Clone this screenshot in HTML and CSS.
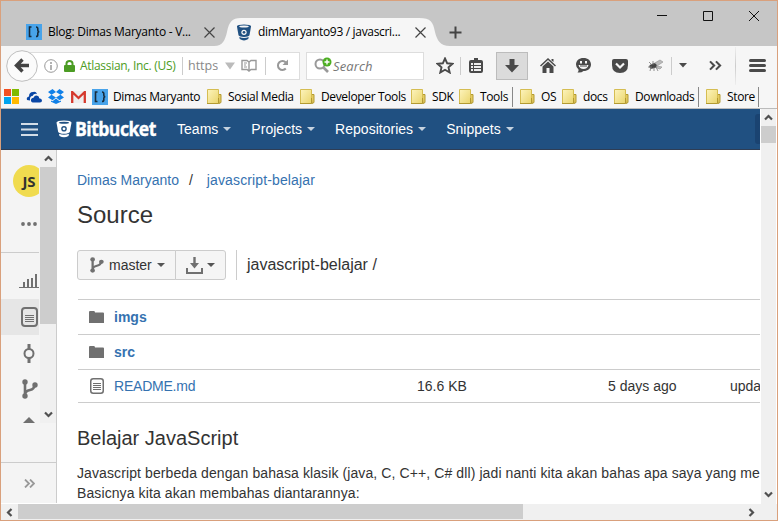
FILE: index.html
```html
<!DOCTYPE html>
<html lang="en">
<head>
<meta charset="utf-8">
<title>dimMaryanto93 / javascript-belajar</title>
<link rel="stylesheet" href="styles.css">
</head>
<body>
<svg class="defs" width="0" height="0" aria-hidden="true">
  <defs>
    <linearGradient id="fold" x1="0" y1="0" x2="1" y2="1"><stop offset="0" stop-color="#fdf4bd"/><stop offset="1" stop-color="#ead56c"/></linearGradient>
    <symbol id="folder" viewBox="0 0 16 16"><path d="M11 5.500h3v8l-2 1z" fill="#e5cc62" stroke="#b39a32"/><path d="M.5.500h11v14h-11z" fill="url(#fold)" stroke="#d5bd52"/><path d="M0 14.500h11.500V9" fill="none" stroke="#b39a32"/></symbol>
    <symbol id="braces" viewBox="0 0 16 16"><path d="M0 0h16v16H0z" fill="#48a3ea"/><path d="M5.500 3H3.500v9.500h2M10 3q1.800 0 1.800 1.800v1.500q0 1.200 1.400 1.400q-1.400.200-1.400 1.400v1.600q0 1.800-1.800 1.800" fill="none" stroke="#172b3c" stroke-width="1.600"/></symbol>
    <symbol id="branch" viewBox="0 0 16 20"><path d="M3 3v14M3 16q0-4 5-5q4.500-1 4.500-5" fill="none" stroke="currentColor" stroke-width="2.600"/><circle cx="3" cy="3" r="2.700" fill="currentColor"/><circle cx="3" cy="17" r="2.700" fill="currentColor"/><circle cx="13" cy="6" r="2.700" fill="currentColor"/></symbol>
    <symbol id="close" viewBox="0 0 11 11"><path d="M.5.5l10 10M10.500.500l-10 10" fill="none" stroke="currentColor" stroke-width="1.200"/></symbol>
    <symbol id="chev" viewBox="0 0 9 7"><path d="M1 5.500L4.500 2L8 5.500" fill="none" stroke="#505050" stroke-width="2.200"/></symbol>
    <symbol id="file" viewBox="0 0 17 20"><rect x="1" y="1" width="15" height="18" rx="3" fill="none" stroke="currentColor" stroke-width="2"/><path d="M4 8.500h9M4 10.500h9M4 12.500h9M4 14.500h9" stroke="currentColor"/></symbol>
    <symbol id="bucket" viewBox="0 0 16 18"><path d="M.5 2.500Q1 .500 8 .500T15.500 2.500L13.800 12Q12.500 13.800 8 13.800T2.200 12z" fill="currentColor"/><path d="M3 13.700Q8 15.800 13 13.700L12.500 16Q8 18.700 3.500 16z" fill="currentColor"/><ellipse class="hole" cx="8" cy="2.700" rx="5" ry="1"/><circle class="hole" cx="8" cy="8.800" r="2.800"/><circle cx="8" cy="8.800" r="1.400" fill="currentColor"/></symbol>
    <symbol id="more" viewBox="0 0 14 12"><path d="M1 1.500L5.500 6L1 10.500M7.500 1.500L12 6L7.500 10.500" fill="none" stroke="currentColor" stroke-width="2.300"/></symbol>
  </defs>
</svg>
<div class="window">
  <header class="tabs">
    <svg class="tab-shape" width="242" height="28" viewBox="0 0 242 28"><path d="M0 28C9 28 11 22 13 14C15 4 18 0 27 0H205C217 0 219 4 221 14C223 22 226 28 236 28z" fill="#f6f6f6"/></svg>
    <svg class="tab-icon" width="16" height="16"><use href="#braces"/></svg>
    <span class="tab-title first">Blog: Dimas Maryanto - V...</span>
    <svg class="tab-close" width="11" height="11"><use href="#close"/></svg>
    <svg class="tab-bucket" width="16" height="17"><use href="#bucket"/></svg>
    <span class="tab-title second">dimMaryanto93 / javascri...</span>
    <svg class="tab-close" width="11" height="11"><use href="#close"/></svg>
    <svg class="tab-new" width="13" height="13"><path d="M6.500.500v12M.500 6.500h12" stroke="#444" stroke-width="2"/></svg>
    <svg class="controls" width="110" height="12" fill="none" stroke="#111"><path d="M1 5.500h10"/><path d="M47.500 1.500h9v9h-9z"/><path d="M93 1l10 10M103 1L93 11"/></svg>
  </header>

  <nav class="toolbar">
    <div class="url">
      <svg class="back" width="32" height="32"><circle cx="16" cy="16" r="15.300" fill="#fbfbfb" stroke="#bebebe"/><path d="M16.500 9.500L10.500 15.500L16.500 21.500M11 15.500H23" fill="none" stroke="#444" stroke-width="3.400"/></svg>
      <svg class="info" width="14" height="14"><circle cx="7" cy="7" r="6.300" fill="none" stroke="#999"/><path d="M7 6v5M7 3v2" stroke="#999" stroke-width="1.500"/></svg>
      <svg class="lock" width="11" height="12"><path d="M2.500 6V3.500a3 2.500 0 0 1 6 0V6" fill="none" stroke="#4c9c24" stroke-width="2"/><rect y="5" width="11" height="7" rx="1" fill="#4c9c24"/></svg>
      <span class="identity">Atlassian, Inc. (US)</span>
      <span class="https">https</span>
      <svg class="drop" width="10" height="8"><path d="M0 .500h10L5 7.500z" fill="#bbb"/></svg>
      <svg class="reader" width="16" height="13"><path d="M1 1.500h5l2 1.500l2-1.500h5v9h-5L8 12l-2-1.500H1zM8 3v8" fill="none" stroke="#999" stroke-width="1.400"/><path d="M3 4h3M3 6h2M3 8h3" stroke="#999"/></svg>
      <i class="sep"></i>
      <svg class="reload" width="13" height="13"><path d="M9.800 9.500A4.500 4.500 0 1 1 9.800 3.500" fill="none" stroke="#999" stroke-width="2"/><path d="M12 .500v5.500H6.500z" fill="#999"/></svg>
    </div>
    <div class="search">
      <svg width="18" height="18"><circle cx="6" cy="7" r="4.500" fill="none" stroke="#999" stroke-width="2"/><path d="M9 10l5 5" stroke="#999" stroke-width="2.600"/><circle cx="13" cy="5" r="4.500" fill="#4dae22"/><path d="M13 2.500v5M10.500 5h5" stroke="#fff" stroke-width="1.400"/></svg>
      <span>Search</span>
    </div>
    <svg class="star" width="18" height="17"><path d="M9 1.500l2.200 4.800l5.300.500l-4 3.600l1.200 5.100L9 12.800l-4.700 2.700l1.200-5.100l-4-3.600l5.300-.5z" fill="none" stroke="#4a4a4a" stroke-width="1.900"/></svg>
    <i class="sep s1"></i>
    <svg class="clip" width="14" height="15"><path d="M5 0h4v2h3q2 0 2 2v9q0 2-2 2H2q-2 0-2-2V4q0-2 2-2h3z" fill="#4a4a4a"/><path d="M2 5h2v2H2zM5 5h7v2H5zM2 8h2v2H2zM5 8h7v2H5zM2 11h2v2H2zM5 11h7v2H5z" fill="#f0f0f0"/></svg>
    <div class="download"><svg width="14" height="14"><path d="M4.500 0h5v6h4.500L7 13.500L0 6h4.500z" fill="#4a4a4a"/></svg></div>
    <svg class="home" width="16" height="15"><path d="M.5 8L8 1l7.500 7" fill="none" stroke="#4a4a4a" stroke-width="1.500"/><path d="M2.500 8.500L8 3.500l5.500 5V15h-4v-5h-3v5h-4zM11.500 1h2v3l-2-1.500z" fill="#4a4a4a"/></svg>
    <svg class="smile" width="15" height="15"><path d="M7.500 0C12 0 15 2.700 15 6.500S12 13 7.500 13Q5.500 15 1.500 14.500Q3 13 2.500 11.500Q0 9.500 0 6.500C0 2.700 3 0 7.500 0z" fill="#4a4a4a"/><path d="M4 3h2v2.500H4zM9 3h2v2.500H9zM2.500 7h10Q11.500 11 7.500 11T2.500 7z" fill="#f6f6f6"/><path d="M4 8h7" stroke="#4a4a4a"/></svg>
    <svg class="pocket" width="16" height="14"><path d="M2 0h12q2 0 2 2v4q0 8-8 8T0 6V2q0-2 2-2z" fill="#4a4a4a"/><path d="M4 4.500l4 4l4-4" fill="none" stroke="#f6f6f6" stroke-width="2.200"/></svg>
    <svg class="fly" width="16" height="13"><path d="M5 5L12 1l3 2l-6 4l5 1l-2 2l-6-2" fill="#bbb" stroke="#999" stroke-width=".7"/><ellipse cx="5" cy="7" rx="3.800" ry="2.500" fill="#444" transform="rotate(-20 5 7)"/><path d="M1 3l3 3M5 2v4M0 8h4M3 8l-1 4M6 8v4M8 8l2 4" stroke="#777" stroke-width=".8"/></svg>
    <i class="sep s2"></i>
    <svg class="caret" width="8" height="5"><path d="M0 0h8L4 4.500z" fill="#4a4a4a"/></svg>
    <svg class="more" width="13" height="11"><use href="#more"/></svg>
    <i class="sep s3"></i>
    <svg class="menu" width="17" height="13"><path d="M1.500 1.500h14M1.500 6.500h14M1.500 11.500h14" stroke="#4a4a4a" stroke-width="3" stroke-linecap="round"/></svg>
  </nav>

  <nav class="bookmarks">
    <svg width="15" height="15"><path d="M0 0h7v7H0z" fill="#f25022"/><path d="M8 0h7v7H8z" fill="#7fba00"/><path d="M0 8h7v7H0z" fill="#00a4ef"/><path d="M8 8h7v7H8z" fill="#ffb900"/></svg>
    <svg width="16" height="12"><path d="M1 9Q0 6 3 5.500Q3 1 7 1Q10 0 11 3Q8 2 6.500 5Q3.500 5 4 9.500z" fill="#0a47a5"/><path d="M7 11.500Q4.500 11 5 8.500Q5.500 7 7.500 6.800Q9 3.500 12 5Q13 5.500 13.200 7.200Q16 7.500 16 9.500T14 11.500z" fill="#0a47a5"/></svg>
    <svg width="16" height="15" fill="#1181e8"><path d="M4.500 0L8 3L3.500 5.700L0 3zM11.500 0L8 3l4.500 2.700L16 3zM0 8.500l3.500-2.800L8 8.500l-3.500 2.800zM16 8.500l-3.500-2.800L8 8.500l3.500 2.800zM8 9.500l3.500 2.800l1.500-.800v1.200L8 15l-5-2.300v-1.200l1.500.800z"/></svg>
    <svg width="15" height="12"><path d="M0 0h15v12H0z" fill="#eee"/><path d="M1.200 12V1l6.300 6L13.800 1v11" fill="none" stroke="#d5392d" stroke-width="2.300"/></svg>
    <a class="bm"><svg width="16" height="16"><use href="#braces"/></svg><span>Dimas Maryanto</span></a>
    <a class="bm"><svg width="16" height="16"><use href="#folder"/></svg><span>Sosial Media</span></a>
    <a class="bm"><svg width="16" height="16"><use href="#folder"/></svg><span>Developer Tools</span></a>
    <a class="bm"><svg width="16" height="16"><use href="#folder"/></svg><span>SDK</span></a>
    <a class="bm"><svg width="16" height="16"><use href="#folder"/></svg><span>Tools</span></a>
    <i></i>
    <a class="bm"><svg width="16" height="16"><use href="#folder"/></svg><span>OS</span></a>
    <a class="bm"><svg width="16" height="16"><use href="#folder"/></svg><span>docs</span></a>
    <a class="bm"><svg width="16" height="16"><use href="#folder"/></svg><span>Downloads</span></a>
    <i></i>
    <a class="bm"><svg width="16" height="16"><use href="#folder"/></svg><span>Store</span></a>
    <i></i>
  </nav>

  <div class="viewport">
    <div class="page">
      <header class="bb">
        <svg class="burger" width="17" height="13"><path d="M0 1h17M0 6.500h17M0 12h17" stroke="#d3dde7" stroke-width="2"/></svg>
        <svg class="logo" width="16" height="18"><use href="#bucket"/></svg>
        <span class="brand"><span>Bitbucket</span></span>
        <span class="nav">Teams</span><b class="tri"></b>
        <span class="nav">Projects</span><b class="tri"></b>
        <span class="nav">Repositories</span><b class="tri"></b>
        <span class="nav">Snippets</span><b class="tri"></b>
        <span class="create"></span>
      </header>
      <div class="body">
        <aside class="side">
          <div class="rail">
            <div class="items">
              <div class="avatar">JS</div>
              <svg class="dots" width="17" height="4" fill="#707070"><circle cx="2" cy="2" r="1.900"/><circle cx="8" cy="2" r="1.900"/><circle cx="14" cy="2" r="1.900"/></svg>
              <div class="cell chart"><svg width="21" height="14"><path d="M0 13.500h21" stroke="#707070"/><path d="M5 8v5M9 5v8M13 4v9M17 0v13" stroke="#707070" stroke-width="2"/></svg></div>
              <div class="cell on"><svg width="17" height="20"><use href="#file"/></svg></div>
              <div class="cell commit"><svg width="12" height="19"><path d="M6 0v5M6 14v5" stroke="#707070" stroke-width="3"/><circle cx="6" cy="9.500" r="4.500" fill="none" stroke="#707070" stroke-width="2"/></svg></div>
              <div class="cell br"><svg width="16" height="20"><use href="#branch"/></svg></div>
              <svg class="up" width="12" height="6"><path d="M6 0l6 6H0z" fill="#707070"/></svg>
            </div>
            <div class="sbar"><svg width="9" height="7"><use href="#chev"/></svg><div class="thumb"></div><svg class="down" width="9" height="7"><use href="#chev"/></svg></div>
          </div>
          <div class="expand"><svg width="11" height="9" fill="none" stroke="#999" stroke-width="1.800"><path d="M1 .500l4 4l-4 4M6 .500l4 4l-4 4"/></svg></div>
        </aside>
        <main class="main">
          <div class="crumbs"><a>Dimas Maryanto</a><span>/</span><a class="repo">javascript-belajar</a></div>
          <h1>Source</h1>
          <div class="actions">
            <div class="btn left"><svg width="14" height="16" viewBox="0 0 16 20" preserveAspectRatio="none"><use href="#branch" width="16" height="20"/></svg><span>master</span><b class="tri dark"></b></div>
            <div class="btn right"><svg width="17" height="17"><path d="M1 11v5h15v-5" fill="none" stroke="#707070" stroke-width="2"/><path d="M7.300 0h2.400v6H13L8.500 11.500L4 6h3.300z" fill="#707070"/></svg><b class="tri dark"></b></div>
            <div class="path">javascript-belajar /</div>
          </div>
          <div class="files">
            <div class="row"><svg class="dir" width="15" height="12"><path d="M0 1q0-1 1-1h4q1 0 1 1.500h8q1 0 1 1V12H0z" fill="#707070"/></svg><a class="strong">imgs</a></div>
            <div class="row"><svg class="dir" width="15" height="12"><path d="M0 1q0-1 1-1h4q1 0 1 1.500h8q1 0 1 1V12H0z" fill="#707070"/></svg><a class="strong">src</a></div>
            <div class="row last"><svg class="doc" width="14" height="16"><rect x=".75" y=".75" width="12.500" height="14.500" rx="2.500" fill="none" stroke="#707070" stroke-width="1.500"/><path d="M3 5.500h8M3 7.500h8M3 9.500h8M3 11.500h8" stroke="#707070"/></svg><a>README.md</a><span class="size">16.6 KB</span><span class="age">5 days ago</span><span class="msg">updated</span></div>
          </div>
          <h2>Belajar JavaScript</h2>
          <p>Javascript berbeda dengan bahasa klasik (java, C, C++, C# dll) jadi nanti kita akan bahas apa saya yang me<br>Basicnya kita akan membahas diantarannya:</p>
        </main>
      </div>
    </div>
    <div class="vbar"><svg width="9" height="7"><use href="#chev"/></svg><div class="thumb"></div><svg class="down" width="9" height="7"><use href="#chev"/></svg></div>
  </div>
  <footer class="hbar"><svg class="l" width="9" height="7"><use href="#chev"/></svg><div class="thumb"></div><svg class="r" width="9" height="7"><use href="#chev"/></svg></footer>
</div>
</body>
</html>
```
FILE: styles.css
```css
* { box-sizing: border-box; }
body { margin: 0; font: 14px/20px "Liberation Sans", Arial, sans-serif; color: #333; overflow: hidden; }
svg { display: block; flex: none; }
.defs { position: absolute; }
.window { width: 778px; height: 521px; border: 1px solid #d9a07c; background: #f6f6f6; display: flex; flex-direction: column; overflow: hidden; }

.tabs { height: 45px; flex: none; background: #c6c6c6; display: flex; position: relative; font: 12px/16px "Open Sans", sans-serif; color: #000; --hole: #f6f6f6; }
.tab-shape { position: absolute; left: 213px; top: 17px; }
.tabs > * { margin-top: 23px; position: relative; }
.tabs > .tab-shape { position: absolute; margin: 0; }
.tab-icon { margin-left: 25px; }
.tab-title { white-space: nowrap; flex: none; }
.first { margin-left: 6px; width: 156px; letter-spacing: -.26px; }
.second { margin-left: 6px; width: 157px; letter-spacing: -.32px; }
.tabs > .tab-close { margin-top: 26px; color: #444; }
.tab-bucket { margin-left: 21px; color: #205081; }
.hole { fill: var(--hole); }
.tabs > .tab-new { margin: 25px 0 0 23px; }
.tabs > .controls { margin: 9px 11px 0 auto; }

.toolbar { height: 39px; flex: none; display: flex; align-items: center; }
.url { width: 279px; flex: none; height: 28px; margin-left: 20px; border: 1px solid #ddd; background: #fff; display: flex; align-items: center; font: 12px/18px "Open Sans", sans-serif; }
.back { margin-left: -16px; }
.info { margin-left: 6px; }
.lock { margin-left: 6px; }
.identity { flex: none; color: #4c9c24; margin-left: 5px; width: 103px; white-space: nowrap; height: 18px; border-right: 1px solid #ccc; letter-spacing: -.3px; }
.https { flex: none; color: #888; font-size: 12.5px; margin-left: 5px; width: 30px; overflow: hidden; }
.drop { margin-left: 7px; }
.reader { margin-left: 6px; }
.sep { width: 1px; height: 18px; background: #ccc; flex: none; }
.url .sep { margin-left: 8px; }
.reload { margin-left: 10px; }
.search { width: 118px; flex: none; height: 28px; margin-left: 6px; border: 1px solid #ddd; background: #fff; display: flex; align-items: center; font: italic 13px/18px "Open Sans", sans-serif; color: #777; letter-spacing: .1px; }
.search svg { margin: 0 1px 0 7px; }
.star { margin-left: 12px; }
.s1 { margin-left: 6px; }
.clip { margin-left: 8px; }
.download { width: 32px; flex: none; height: 28px; margin-left: 13px; border: 1px solid #bcbcbc; background: #dbdbdb; display: flex; align-items: center; justify-content: center; }
.home { margin-left: 12px; }
.smile { margin-left: 20px; }
.pocket { margin-left: 21px; }
.fly { margin-left: 20px; }
.s2 { margin-left: 7px; }
.caret { margin-left: 7px; }
.more { margin-left: 22px; color: #4a4a4a; }
.s3 { margin-left: 13px; height: 38px; background: linear-gradient(#eee, #ccc, #eee); }
.menu { margin-left: 13px; }

.bookmarks { height: 24px; flex: none; border-bottom: 1px solid #bbb; display: grid; grid-template-columns: 22px 22px 23px 21px 115px 93px 111px 48px 53px 8px 42px 52px 84px 8px 52px 1px; padding-left: 3px; align-items: center; font: 12px/16px "Open Sans", sans-serif; }
.bm { display: flex; white-space: nowrap; color: #000; letter-spacing: -.36px; }
.bm svg { margin-right: 5px; }
.bookmarks i { width: 1px; height: 20px; background: #888; }

.viewport { height: 395px; flex: none; display: flex; background: #fff; }
.page { width: 759px; height: 394px; overflow: hidden; }
.bb { height: 41px; background: #205081; border-bottom: 1px solid #2e3d54; display: flex; align-items: center; color: #fff; --hole: #205081; }
.burger { margin-left: 20px; }
.logo { margin-left: 18px; color: #fff; }
.brand { width: 102px; flex: none; margin-left: 3px; }
.brand span { display: block; width: 0; font: 700 20px/24px "Open Sans", sans-serif; letter-spacing: -.6px; transform: scaleX(.88); transform-origin: 0 0; -webkit-text-stroke: .4px #fff; }
.tri { border: 4px solid transparent; border-top-color: #c5d2df; border-bottom: 0; margin: 0 20px 0 5px; }
.tri.dark { border-top-color: #555; margin: 0 0 0 5px; }
.nav { letter-spacing: .02px; }
.create { margin-left: auto; width: 5px; height: 30px; background: #1a4371; border-radius: 3px 0 0 3px; }

.body { display: flex; height: 353px; }
.side { width: 56px; flex: none; background: #f4f4f4; border-right: 1px solid #ccc; }
.rail { height: 273px; display: flex; }
.items { width: 38px; overflow: hidden; margin-right: 1px; color: #707070; }
.avatar { width: 32px; height: 32px; margin: 15px 0 0 12px; border-radius: 50%; background: #f0db4f; color: #323330; font: 700 15px/33px "Open Sans", sans-serif; text-align: center; }
.dots { margin: 25px 0 0 20px; }
.cell { height: 36px; display: flex; align-items: center; padding-left: 20px; }
.cell.chart { height: 47px; margin-top: 26px; border-top: 1px solid #ccc; padding: 9px 0 0 18px; }
.on { background: #e6e6e6; }
.cell.commit { padding-left: 22px; }
.cell.br { padding-left: 21px; }
.up { margin: 10px 0 0 22px; }
.sbar { width: 16px; background: #f0f0f0; display: flex; flex-direction: column; align-items: center; }
.sbar svg, .vbar svg { margin-top: 5px; }
.thumb { background: #cdcdcd; }
.sbar .thumb { width: 16px; height: 157px; margin-top: 5px; }
svg.down { transform: rotate(180deg); }
.sbar .down { margin: auto 0 5px; }
.expand { height: 80px; padding: 56px 0 0 23px; background: linear-gradient(#ccc, #ccc) 0 39px / 100% 1px no-repeat; }

.main { flex: 1; min-width: 0; padding: 20px 0 0 20px; overflow: hidden; }
a { color: #3572b0; }
.crumbs { height: 20px; }
.crumbs span { margin: 0 14px 0 10px; }
.repo { letter-spacing: .13px; }
h1 { font-size: 24px; line-height: 30px; font-weight: 400; margin: 10px 0 0; }
.actions { height: 30px; display: flex; margin-top: 20px; }
.btn { height: 30px; border: 1px solid #ccc; background: #f5f5f5; display: flex; align-items: center; color: #707070; }
.btn span { color: #333; margin-left: 5px; }
.left { width: 99px; padding-left: 12px; border-radius: 3px 0 0 3px; }
.right { width: 51px; margin-left: -1px; padding-left: 10px; border-radius: 0 3px 3px 0; }
.right .tri { margin-left: 4px; }
.path { margin-left: 10px; border-left: 1px solid #ccc; padding-left: 10px; font-size: 16px; line-height: 30px; }
.files { margin: 19px 0 0 1px; border-top: 1px solid #ccc; }
.row { height: 35px; border-bottom: 1px solid #ccc; display: flex; align-items: center; white-space: nowrap; }
.row.last { height: 33px; }
.dir { margin: 0 10px 0 11px; }
.doc { margin: 0 10px 0 12px; }
.strong { font-weight: 700; }
.last > * { flex: none; }
.last a { width: 303px; letter-spacing: -.22px; }
.size { width: 191px; }
.age { width: 122px; }
h2 { font-size: 20px; line-height: 24px; font-weight: 400; margin: 23px 0 13px; }
p { margin: 0; white-space: nowrap; letter-spacing: .1px; }

.vbar { width: 15px; margin-left: 1px; background: #f0f0f0; display: flex; flex-direction: column; align-items: center; }
.vbar .thumb { width: 15px; height: 17px; margin-top: 5px; }
.vbar .down { margin: auto 0 6px; }
.hbar { height: 16px; flex: none; background: #f0f0f0; display: flex; align-items: center; }
.hbar .l { transform: rotate(-90deg); margin-left: 4px; }
.hbar .thumb { width: 505px; height: 15px; margin: 0 auto 1px 4px; }
.hbar .r { transform: rotate(90deg); margin-right: 21px; }
```
